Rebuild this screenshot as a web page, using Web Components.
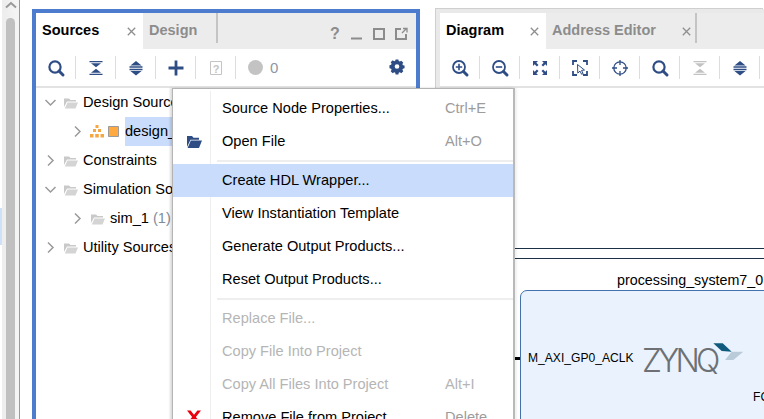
<!DOCTYPE html>
<html lang="en">
<head>
<meta charset="utf-8">
<title>Block design</title>
<style>
  html, body { margin: 0; height: 100%; overflow: hidden; background: #fff; }
  body { font: 14.6px "Liberation Sans", Arial, sans-serif; color: #000; }
</style>
</head>
<body>

<ide-window>
  <side-strip slot="strip"></side-strip>

  <tool-panel slot="left" focused>
    <panel-tab slot="tabs" active width="107">Sources</panel-tab>
    <panel-tab slot="tabs" width="75" divider noclose>Design</panel-tab>
    <window-actions slot="actions"></window-actions>

    <tool-button slot="tools" icon="search"></tool-button>
    <tool-button slot="tools" icon="collapse"></tool-button>
    <tool-button slot="tools" icon="expand"></tool-button>
    <tool-button slot="tools" icon="plus"></tool-button>
    <tool-button slot="tools" icon="help"></tool-button>
    <status-count slot="tools">0</status-count>
    <tool-button slot="tools" icon="gear" plain end></tool-button>

    <tree-row open>Design Sources</tree-row>
    <tree-row level="1" kind="design" selected>design_1 (design_1.bd) (1)</tree-row>
    <tree-row>Constraints</tree-row>
    <tree-row open>Simulation Sources (1)</tree-row>
    <tree-row level="1" count="(1)">sim_1</tree-row>
    <tree-row>Utility Sources</tree-row>
  </tool-panel>

  <tool-panel slot="right">
    <panel-tab slot="tabs" active width="106">Diagram</panel-tab>
    <panel-tab slot="tabs" width="151" divider>Address Editor</panel-tab>

    <tool-button slot="tools" icon="zoomin"></tool-button>
    <tool-button slot="tools" icon="zoomout"></tool-button>
    <tool-button slot="tools" icon="fit"></tool-button>
    <tool-button slot="tools" icon="select"></tool-button>
    <tool-button slot="tools" icon="target"></tool-button>
    <tool-button slot="tools" icon="search"></tool-button>
    <tool-button slot="tools" icon="collapse" muted></tool-button>
    <tool-button slot="tools" icon="expand"></tool-button>

    <diagram-canvas></diagram-canvas>
  </tool-panel>

  <context-menu slot="overlay">
    <menu-item shortcut="Ctrl+E">Source Node Properties...</menu-item>
    <menu-item icon="folder" shortcut="Alt+O">Open File</menu-item>
    <menu-rule></menu-rule>
    <menu-item active lift>Create HDL Wrapper...</menu-item>
    <menu-item lift>View Instantiation Template</menu-item>
    <menu-item lift>Generate Output Products...</menu-item>
    <menu-item lift>Reset Output Products...</menu-item>
    <menu-rule tight></menu-rule>
    <menu-item disabled>Replace File...</menu-item>
    <menu-item disabled>Copy File Into Project</menu-item>
    <menu-item disabled shortcut="Alt+I">Copy All Files Into Project</menu-item>
    <menu-item icon="remove" shortcut="Delete">Remove File from Project</menu-item>
  </context-menu>
</ide-window>

<script>
// Icons are 20x20, drawn around the middle of the box
const NAVY = '#2f4d85';
const ICONS = {
  search: `<circle cx="9" cy="9" r="5.6" fill="none" stroke="${NAVY}" stroke-width="2.2"/><path d="M13 13l4 4" stroke="${NAVY}" stroke-width="3" stroke-linecap="round"/>`,
  zoomin: `<circle cx="9" cy="9" r="6" fill="none" stroke="${NAVY}" stroke-width="1.8"/><path d="M5.8 9h6.4M9 5.8v6.4" stroke="${NAVY}" stroke-width="1.6"/><path d="M13.5 13.5l3.5 3.5" stroke="${NAVY}" stroke-width="3" stroke-linecap="round"/>`,
  zoomout: `<circle cx="9" cy="9" r="6" fill="none" stroke="${NAVY}" stroke-width="1.8"/><path d="M5.8 9h6.4" stroke="${NAVY}" stroke-width="1.6"/><path d="M13.5 13.5l3.5 3.5" stroke="${NAVY}" stroke-width="3" stroke-linecap="round"/>`,
  collapse: `<path d="M3.500 3h13v1.300h-13zM5 5.300h10L10 9.200zM10 10.800l5 3.900H5zM3.500 15.700h13V17h-13z" fill="currentColor"/>`,
  expand: `<path d="M10 3l5.600 4.400H4.400zM3.500 8.300h13v1.500h-13zM3.500 10.700h13v1.500h-13zM4.400 13h11.200L10 17.400z" fill="currentColor"/>`,
  plus: `<path d="M8.600 2.500h2.800v6.100h6.100v2.800h-6.100v6.100H8.600v-6.100H2.500V8.600h6.100z" fill="${NAVY}"/>`,
  help: `<path d="M4.500 3.500h11v13h-11z" fill="none" stroke="#c4c4c4"/><text x="10" y="14.500" font-size="11" font-weight="700" text-anchor="middle" fill="#c4c4c4" font-family="Liberation Sans">?</text>`,
  gear: `<path fill-rule="evenodd" transform="translate(1.700 .4) scale(.83)" d="M8.300 1.200h3.400l.4 2 1.300.6 1.800-1.100 2.400 2.400-1.100 1.700.6 1.400 2 .4v3.400l-2 .4-.6 1.400 1.100 1.700-2.400 2.400-1.800-1.100-1.300.6-.4 2H8.300l-.4-2-1.300-.6-1.800 1.100-2.400-2.400 1.100-1.700-.6-1.400-2-.4V8.200l2-.4.6-1.400-1.100-1.700 2.400-2.400 1.800 1.100 1.300-.6zM10 7a2.800 2.800 0 1 0 0 5.600A2.800 2.800 0 0 0 10 7z" fill="${NAVY}"/>`,
  fit: `<g fill="${NAVY}"><path d="M3 3h5L6.300 4.700 8.500 6.900 6.900 8.500 4.700 6.300 3 8zM17 3v5l-1.700-1.700-2.200 2.200-1.600-1.600 2.200-2.200L12 3zM3 17v-5l1.700 1.700 2.200-2.200 1.600 1.600-2.200 2.200L8 17zM17 17h-5l1.700-1.700-2.200-2.200 1.600-1.600 2.200 2.200L17 12z"/></g>`,
  select: `<path d="M7 3H3v4M13 3h4v4M3 13v4h4M17 13v4h-4" fill="none" stroke="${NAVY}" stroke-width="1.800"/><path d="M7.500 6.500l7 5.500-3 .4 1.600 3.200-1.500.7-1.600-3.200-2.200 2z" fill="#fff" stroke="${NAVY}" stroke-width="1"/>`,
  target: `<circle cx="10" cy="10" r="6.200" fill="none" stroke="${NAVY}" stroke-width="1.300"/><path d="M10 2v5M10 13v5M2 10h5M13 10h5" stroke="${NAVY}" stroke-width="1.300"/>`,
  folder: `<path d="M1 3h5l1.500 1.800H13v2H4.500L1 14z" fill="${NAVY}"/><path d="M4.800 7.600H16L13 15H1.600z" fill="${NAVY}"/>`,
  graywork: `<path d="M1 2.500h5l1.500 1.500H13v1.500H4L1 11z" fill="#c9c9c9"/><path d="M4.500 6.500H15L12.500 12.500H1.800z" fill="#d4d4d4"/>`,
  remove: `<path d="M1 1.500h3.600L8 5.800l3.400-4.300H15L9.900 8l5.100 6.500h-3.600L8 10.200l-3.400 4.300H1L6.100 8z" fill="#e8000f"/>`
};

// Small helper so each class keeps just its markup and styles
function shadow(el, css, html) {
  el.attachShadow({ mode: 'open' }).innerHTML = `<style>${css}</style>${html}`;
}

class IdeWindow extends HTMLElement {
  constructor() {
    super();
    shadow(this, `
      :host { display: grid; grid-template-columns: 20px 400px 1fr; width: 764px; height: 419px;
              position: relative; overflow: hidden; background: #fff; }
      .left { padding: 9px 0 0 12px; min-height: 0; display: flex; }
      .right { padding: 9px 0 0 16px; min-height: 0; display: flex; min-width: 0; }
      ::slotted(tool-panel) { flex: 1; min-width: 0; }
    `, `
      <slot name="strip"></slot>
      <div class="left"><slot name="left"></slot></div>
      <div class="right"><slot name="right"></slot></div>
      <slot name="overlay"></slot>
    `);
  }
}

class SideStrip extends HTMLElement {
  constructor() {
    super();
    shadow(this, `
      :host { display: block; position: relative; box-sizing: border-box; border-right: 1px solid #999;
              background: linear-gradient(90deg, #fff 0 2px, #eee 2px 6px, #f4f4f4 15px 19px); }
      .thumb { position: absolute; left: 6px; width: 9px; top: 18px; bottom: 0; background: #c0c0c0; border-radius: 5px 5px 0 0; }
      .mark { position: absolute; left: 0; top: 208px; width: 2px; height: 37px; background: #cfe0fb; }
      svg { position: absolute; left: 5px; top: 1px; }
    `, `
      <svg width="12" height="8" viewBox="0 0 12 8"><path d="M1 6.500L6 2l5 4.500" fill="none" stroke="#999" stroke-width="2"/></svg>
      <div class="thumb"></div><div class="mark"></div>
    `);
  }
}

class ToolPanel extends HTMLElement {
  constructor() {
    super();
    shadow(this, `
      :host { display: flex; flex-direction: column; box-sizing: border-box; min-height: 0;
              border: solid #e9e9e9; border-width: 4px 0 0 4px; box-shadow: -1px -1px 0 #cfcfcf; background: #fff; }
      :host([focused]) { border: solid #4d7cce; border-width: 4px 4px 0 4px; box-shadow: none; }
      .tabs { display: flex; height: 36px; flex: none; background: #ececec; }
      .actions { margin-left: auto; display: flex; }
      .tools { display: flex; align-items: center; height: 37px; flex: none; padding-bottom: 0; }
      .rule { height: 2px; flex: none; background: #e3e3e3; }
      .body { flex: 1; min-height: 0; display: flex; flex-direction: column; position: relative; }
    `, `
      <div class="tabs"><slot name="tabs"></slot><div class="actions"><slot name="actions"></slot></div></div>
      <div class="tools"><slot name="tools"></slot></div>
      <div class="rule"></div>
      <div class="body"><slot></slot></div>
    `);
  }
}

class PanelTab extends HTMLElement {
  static get observedAttributes() { return ['width']; }
  constructor() {
    super();
    shadow(this, `
      :host { display: flex; align-items: center; box-sizing: border-box; position: relative; height: 36px;
              padding: 0 0 3px 6px; font: bold 14.500px "Liberation Sans", Arial, sans-serif; color: #8c8c8c; }
      :host([active]) { background: #fff; color: #000; }
      :host([divider])::after { content: ""; position: absolute; right: 0; top: 0; width: 2px; height: 30px; background: #c4c4c4; }
      svg { position: absolute; top: 14px; right: 7px; }
      :host([divider]) svg { right: 6px; }
      :host([noclose]) svg { display: none; }
    `, `
      <slot></slot>
      <svg width="9" height="9" viewBox="0 0 9 9"><path d="M.8.800l7.400 7.400M8.200.800L.8 8.200" stroke="#8e8e8e" stroke-width="1.300"/></svg>
    `);
  }
  attributeChangedCallback(name, oldValue, newValue) {
    this.style.width = newValue + 'px';
  }
}

class WindowActions extends HTMLElement {
  constructor() {
    super();
    shadow(this, `
      :host { display: flex; align-items: center; gap: 8px; padding: 5px 8px 0 0; color: #8c8c8c; }
      span { font: bold 16px "Liberation Sans", sans-serif; width: 14px; text-align: center; }
      svg { display: block; }
    `, `
      <span>?</span>
      <svg width="14" height="14" viewBox="0 0 14 14"><path d="M1 11.500h11" stroke="#8c8c8c" stroke-width="2"/></svg>
      <svg width="14" height="14" viewBox="0 0 14 14"><path d="M2 2h10v10H2z" fill="none" stroke="#8c8c8c" stroke-width="2"/></svg>
      <svg width="14" height="14" viewBox="0 0 14 14"><path d="M7 2H2v10h10V7" fill="none" stroke="#8c8c8c" stroke-width="2"/><path d="M8 6l4-4M9 1.500h4v4" fill="none" stroke="#8c8c8c" stroke-width="1.300"/></svg>
    `);
  }
}

class ToolButton extends HTMLElement {
  constructor() {
    super();
    const name = this.getAttribute('icon');
    shadow(this, `
      :host { display: flex; align-items: center; justify-content: center; box-sizing: border-box;
              width: 40px; height: 23px; border-right: 1px solid #ddd; color: ${NAVY}; }
      :host([muted]) { color: #c2c2c2; }
      :host([plain]) { border: 0; }
      :host([end]) { margin-left: auto; margin-right: -1px; }
      svg { display: block; }
    `, `<svg width="20" height="20" viewBox="0 0 20 20">${ICONS[name] || ''}</svg>`);
  }
}

class StatusCount extends HTMLElement {
  constructor() {
    super();
    shadow(this, `
      :host { display: flex; align-items: center; gap: 7px; margin-left: 12px; color: #8c97a5; font-size: 15px; }
      i { width: 15px; height: 15px; border-radius: 50%; background: #c3c3c3; }
    `, `<i></i><slot></slot>`);
  }
}

class TreeRow extends HTMLElement {
  constructor() {
    super();
    const open = this.hasAttribute('open');
    const kind = this.getAttribute('kind');
    const count = this.getAttribute('count');
    const chevron = open
      ? '<path d="M1.500 4l5 5 5-5" fill="none" stroke="#9a9a9a" stroke-width="1.500"/>'
      : '<path d="M4 1.500l5 5-5 5" fill="none" stroke="#9a9a9a" stroke-width="1.500"/>';
    const icon = kind === 'design'
      ? `<svg class="pyr" width="14" height="13" viewBox="0 0 14 13"><path fill="#f5a742" d="M5.500 0h3v3h-3zM3 4h3v3H3zM8 4h3v3H8zM0 9h3.500v3.500H0zM5.200 9h3.600v3.500H5.200zM10.500 9H14v3.500h-3.500z"/></svg>
         <svg class="sq" width="11" height="11" viewBox="0 0 11 11"><path d="M.5.500h10v10H.5z" fill="#ffa940" stroke="#9b9b9b"/></svg>`
      : `<svg class="fld" width="15" height="13" viewBox="0 0 15 13">${ICONS.graywork}</svg>`;
    shadow(this, `
      :host { display: flex; align-items: center; height: 29px; white-space: nowrap; flex: none;
              padding-left: calc(8px + var(--lvl) * 27px); font-size: 14.600px; }
      svg { margin-bottom: 1px; }
      .chev { width: 13px; margin-right: 6px; flex: none; display: block; }
      .fld { margin-right: 5px; flex: none; }
      .pyr { margin-right: 4px; flex: none; }
      .sq { margin-right: 6px; flex: none; }
      .label { display: flex; align-items: center; box-sizing: border-box; height: 29px; padding-bottom: 2px; }
      :host([selected]) .label { background: #c9dcfb; }
      em { font-style: normal; color: #7f8c9b; margin-left: 4px; }
    `, `
      <svg class="chev" width="13" height="13" viewBox="0 0 13 13">${chevron}</svg>
      ${icon}
      <div class="label"><slot></slot>${count ? `<em>${count}</em>` : ''}</div>
    `);
    this.style.setProperty('--lvl', this.getAttribute('level') || 0);
  }
}

class ContextMenu extends HTMLElement {
  constructor() {
    super();
    shadow(this, `
      :host { position: absolute; left: 172px; top: 88px; width: 340px; display: block; background: #fff;
              border: 1px solid #b4b4b4; border-right: 2px solid #b9b9b9; padding-top: 2px;
              box-shadow: -2px 0 2px rgba(0,0,0,.14), 2px 0 2px rgba(0,0,0,.06); }
    `, `<slot></slot>`);
  }
}

class MenuItem extends HTMLElement {
  constructor() {
    super();
    const name = this.getAttribute('icon');
    const key = this.getAttribute('shortcut') || '';
    shadow(this, `
      :host { display: flex; align-items: center; height: 33px; white-space: nowrap; box-sizing: border-box; }
      :host([lift]) .label { padding-bottom: 2px; }
      :host([active]) { background: #c9dcfb; }
      :host([disabled]) { color: #b5b5b5; }
      .gutter { width: 38px; height: 33px; flex: none; box-sizing: border-box; border-right: 1px solid #eee;
                display: flex; align-items: center; justify-content: center; padding: 0 0 0 5px; margin-right: 11px; }
      :host([active]) .gutter { border-color: transparent; }
      .label { flex: none; width: 223px; }
      .key { color: #9c9c9c; }
      :host([disabled]) .key { color: #b5b5b5; }
      svg { display: block; }
    `, `
      <div class="gutter">${name ? `<svg width="16" height="16" viewBox="0 0 16 16">${ICONS[name]}</svg>` : ''}</div>
      <div class="label"><slot></slot></div>
      <div class="key">${key}</div>
    `);
  }
}

class MenuRule extends HTMLElement {
  constructor() {
    super();
    shadow(this, `
      :host { display: flex; height: 7px; }
      :host([tight]) { height: 5px; }
      .gutter { width: 38px; box-sizing: border-box; border-right: 1px solid #eee; flex: none; }
      .line { flex: 1; margin: 3px 0 2px 6px; background: #eee; }
      :host([tight]) .line { margin: 2px 0 1px 6px; }
    `, `<div class="gutter"></div><div class="line"></div>`);
  }
}

// Free canvas: everything in here sits at its diagram coordinates
class DiagramCanvas extends HTMLElement {
  constructor() {
    super();
    shadow(this, `
      :host { display: block; position: relative; flex: 1; overflow: hidden; font-family: "Liberation Sans", Arial, sans-serif; }
      .wire { position: absolute; left: 0; right: 0; height: 1px; background: #1b2f45; }
      .name { position: absolute; left: 177px; top: 184px; font-size: 14.300px; white-space: nowrap; }
      .block { position: absolute; left: 80px; top: 202px; width: 400px; height: 300px; box-sizing: border-box;
               background: #eaf3fd; border: 1px solid #4272ab; border-radius: 7px; }
      .stub { position: absolute; left: 74px; top: 269px; width: 6px; height: 3px; background: #000; }
      .port { position: absolute; font-size: 12.100px; white-space: nowrap; }
      .zynq { position: absolute; left: 202px; top: 253px; font: 300 32px Inter, "Liberation Sans", sans-serif; letter-spacing: -3.800px; color: #6d7074; }
      svg { position: absolute; left: 272px; top: 254px; }
    `, `
      <div class="wire" style="top:160px"></div>
      <div class="wire" style="top:170px"></div>
      <div class="name">processing_system7_0</div>
      <div class="block"></div>
      <div class="stub"></div>
      <div class="port" style="left:88px;top:263px">M_AXI_GP0_ACLK</div>
      <div class="zynq">ZYNQ</div>
      <svg width="34" height="20" viewBox="0 0 34 20">
        <path d="M1.300 1.300h9.400l9 8.400-10-.7z" fill="#0f5a7d"/>
        <path d="M19.700 9.700h11.600l-10 8.300h-8.300z" fill="#b9cbd9"/>
      </svg>
      <div class="port" style="left:313px;top:302px">FCLK_CLK0</div>
    `);
  }
}

customElements.define('ide-window', IdeWindow);
customElements.define('side-strip', SideStrip);
customElements.define('tool-panel', ToolPanel);
customElements.define('panel-tab', PanelTab);
customElements.define('window-actions', WindowActions);
customElements.define('tool-button', ToolButton);
customElements.define('status-count', StatusCount);
customElements.define('tree-row', TreeRow);
customElements.define('context-menu', ContextMenu);
customElements.define('menu-item', MenuItem);
customElements.define('menu-rule', MenuRule);
customElements.define('diagram-canvas', DiagramCanvas);
</script>
</body>
</html>
